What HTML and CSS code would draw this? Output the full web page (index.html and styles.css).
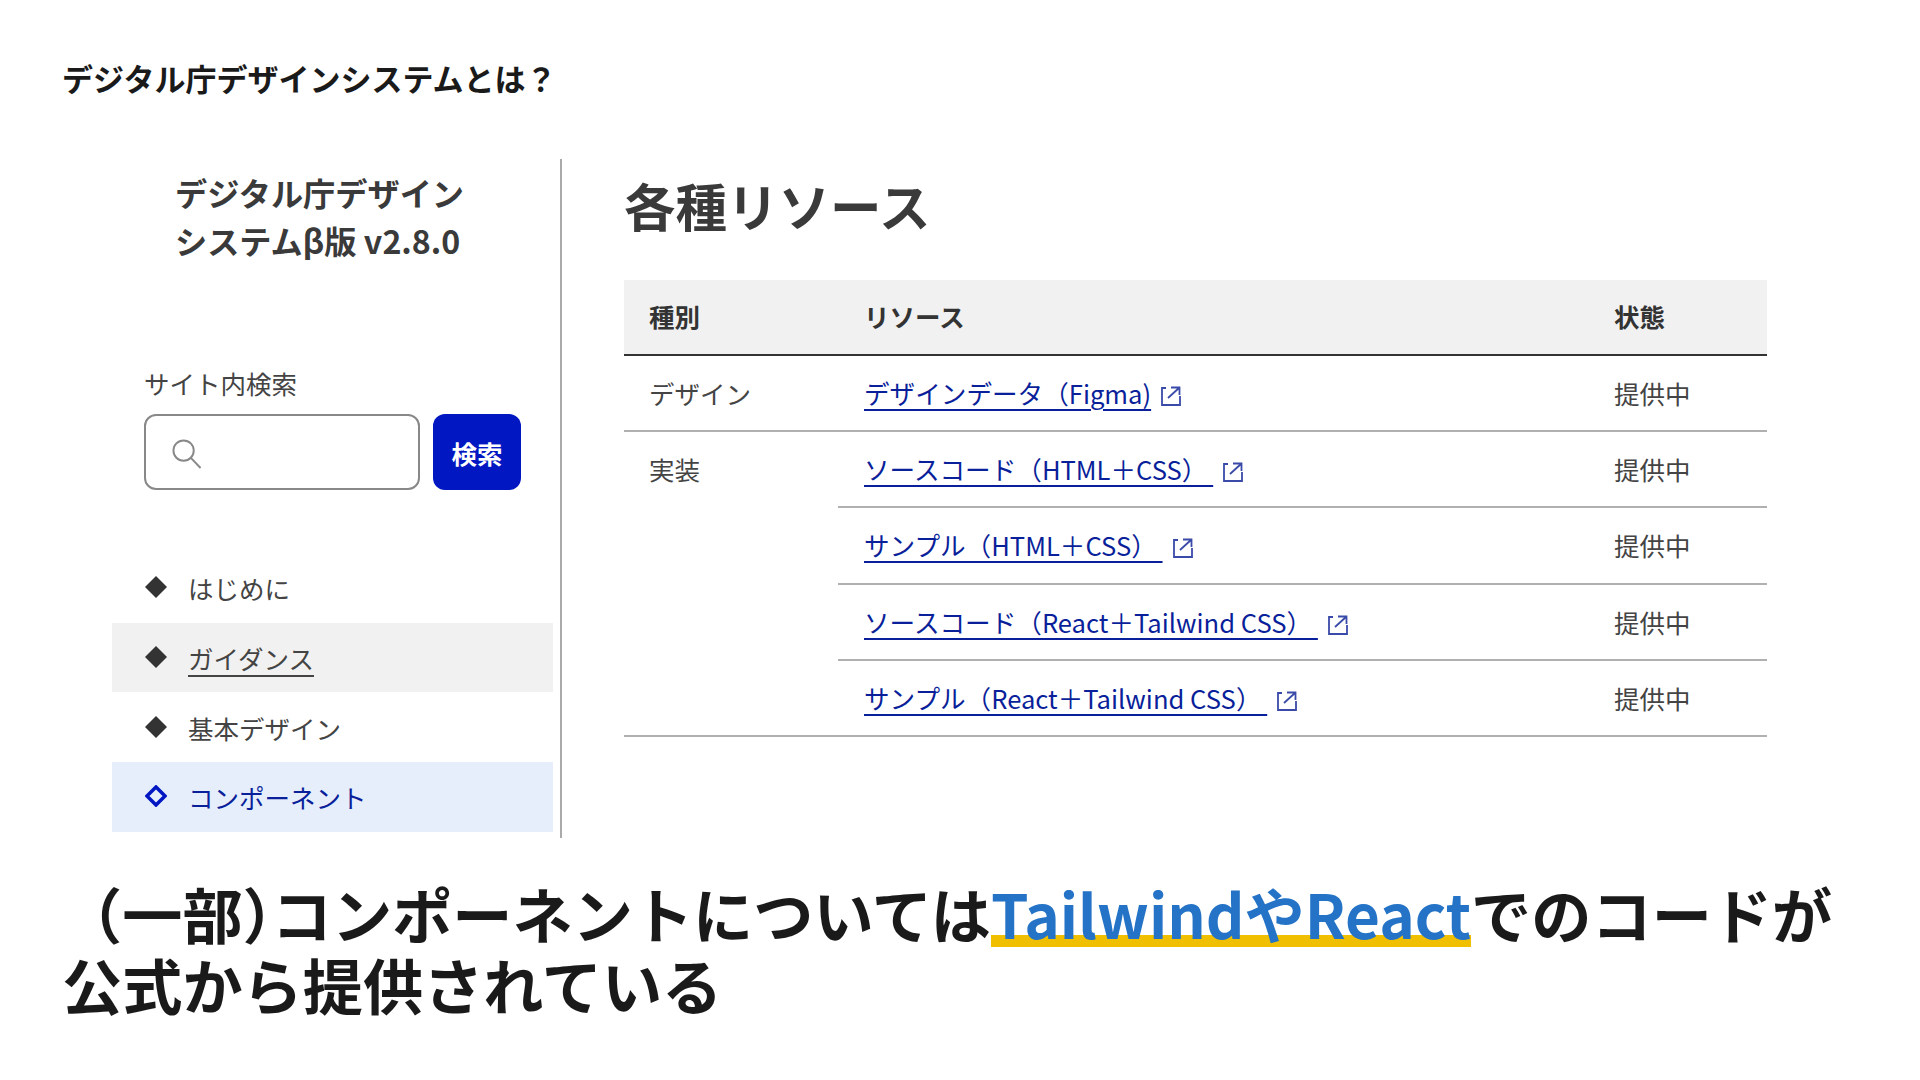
FILE: index.html
```html
<!DOCTYPE html>
<html lang="ja">
<head>
<meta charset="utf-8">
<title>デジタル庁デザインシステムとは？</title>
<link rel="stylesheet" href="styles.css">
</head>
<body>
<div class="slide">
  <h2 class="slide-title">デジタル庁デザインシステムとは？</h2>
  <div class="shot">
    <aside class="side">
      <div class="brand">デジタル庁デザイン<br>システムβ版 v2.8.0</div>
      <div class="search-label">サイト内検索</div>
      <div class="search">
        <div class="search-box">
          <svg class="search-icon" viewBox="0 0 32 32"><circle cx="13" cy="13" r="10.5"/><path d="M20.5 20.5 L30.5 31"/></svg>
        </div>
        <div class="search-btn">検索</div>
      </div>
      <ul class="nav">
        <li class="nav-item"><svg class="dia" viewBox="0 0 22 22"><path d="M11 0 L22 11 L11 22 L0 11 Z"/></svg><span>はじめに</span></li>
        <li class="nav-item hover"><svg class="dia" viewBox="0 0 22 22"><path d="M11 0 L22 11 L11 22 L0 11 Z"/></svg><span class="under">ガイダンス</span></li>
        <li class="nav-item"><svg class="dia" viewBox="0 0 22 22"><path d="M11 0 L22 11 L11 22 L0 11 Z"/></svg><span>基本デザイン</span></li>
        <li class="nav-item active"><svg class="dia open" viewBox="0 0 22 22"><path d="M11 2 L20 11 L11 20 L2 11 Z"/></svg><span>コンポーネント</span></li>
      </ul>
    </aside>
    <main class="content">
      <h1 class="content-title">各種リソース</h1>
      <table class="res">
        <thead>
          <tr><th class="c1">種別</th><th class="c2">リソース</th><th class="c3">状態</th></tr>
        </thead>
        <tbody>
          <tr class="major">
            <td class="c1">デザイン</td>
            <td class="c2"><a class="lnk">デザインデータ（Figma)</a><svg class="ext" viewBox="0 0 20 20"><path d="M5 2 H1 V19 H19 V10"/><path d="M7 12 L18.5 1.5 M10 1.5 H18.5 V9"/></svg></td>
            <td class="c3">提供中</td>
          </tr>
          <tr>
            <td class="c1" rowspan="4">実装</td>
            <td class="c2"><a class="lnk">ソースコード（HTML＋CSS）&nbsp;</a><svg class="ext" viewBox="0 0 20 20"><path d="M5 2 H1 V19 H19 V10"/><path d="M7 12 L18.5 1.5 M10 1.5 H18.5 V9"/></svg></td>
            <td class="c3">提供中</td>
          </tr>
          <tr>
            <td class="c2"><a class="lnk">サンプル（HTML＋CSS）&nbsp;</a><svg class="ext" viewBox="0 0 20 20"><path d="M5 2 H1 V19 H19 V10"/><path d="M7 12 L18.5 1.5 M10 1.5 H18.5 V9"/></svg></td>
            <td class="c3">提供中</td>
          </tr>
          <tr>
            <td class="c2"><a class="lnk">ソースコード（React＋Tailwind CSS）&nbsp;</a><svg class="ext" viewBox="0 0 20 20"><path d="M5 2 H1 V19 H19 V10"/><path d="M7 12 L18.5 1.5 M10 1.5 H18.5 V9"/></svg></td>
            <td class="c3">提供中</td>
          </tr>
          <tr>
            <td class="c2"><a class="lnk">サンプル（React＋Tailwind CSS）&nbsp;</a><svg class="ext" viewBox="0 0 20 20"><path d="M5 2 H1 V19 H19 V10"/><path d="M7 12 L18.5 1.5 M10 1.5 H18.5 V9"/></svg></td>
            <td class="c3">提供中</td>
          </tr>
        </tbody>
      </table>
    </main>
  </div>
  <p class="caption">（一部<span class="tight">）</span>コンポーネントについては<span class="hl">TailwindやReact</span>でのコードが<br>公式から提供されている</p>
</div>
</body>
</html>
```
FILE: styles.css
```css
* { box-sizing: border-box; }
html, body { margin: 0; padding: 0; background: #fff; }
body { font-family: "Noto Sans CJK JP", "Noto Sans", sans-serif; color: #333; }
.slide { width: 1920px; height: 1080px; padding: 55px 0 0 62px; overflow: hidden; }
.slide-title { margin: 0; font-size: 31px; line-height: 46px; font-weight: 700; color: #1a1a1a; }
.shot { display: flex; margin: 58px 0 0 50px; height: 679px; }
.side { width: 450px; border-right: 2px solid #aaa; flex: none; }
.brand { margin: 9px 0 0 63px; font-size: 32.2px; line-height: 48px; font-weight: 700; color: #3a3a3a; }
.search-label { margin: 102px 0 0 32px; font-size: 25.5px; line-height: 34px; color: #444; }
.search { display: flex; gap: 13px; margin: 14px 0 0 32px; }
.search-box { width: 276px; height: 76px; border: 2px solid #888; border-radius: 12px; padding: 22px 0 0 25px; }
.search-icon { display: block; width: 31px; height: 31px; fill: none; stroke: #888; stroke-width: 2; }
.search-btn { width: 88px; height: 76px; border-radius: 12px; background: #0017c1; color: #fff; font-size: 25.5px; font-weight: 700; display: flex; align-items: center; justify-content: center; }
.nav { list-style: none; margin: 63px 0 0; padding: 0; width: 441px; }
.nav-item { height: 69.7px; display: flex; align-items: center; padding-left: 33px; font-size: 25.5px; color: #444; }
.nav-item span { margin-left: 21px; }
.dia { width: 22px; height: 22px; flex: none; fill: #333; margin-top: -1px; }
.hover { background: #f1f1f1; }
.under { text-decoration: underline; text-underline-offset: 6px; text-decoration-thickness: 2px; }
.active { background: #e6eefc; color: #0a1f9a; }
.dia.open { fill: none; stroke: #0017c1; stroke-width: 3.5; }
.content { flex: none; width: 1143px; margin-left: 62px; }
.content-title { margin: 0; font-size: 51.5px; line-height: 76px; font-weight: 700; color: #3a3a3a; padding-top: 8px; }
.res { width: 1143px; margin-top: 37px; border-collapse: collapse; table-layout: fixed; font-size: 25.5px; }
.res th { height: 75px; background: #f1f1f1; border-bottom: 2px solid #333; font-weight: 700; text-align: left; color: #333; padding-bottom: 5px; }
.res td { height: 76.2px; border-bottom: 2px solid #b0b0b0; color: #444; padding-bottom: 2px; }
.res td[rowspan] { vertical-align: top; padding-top: 18px; }
.c1 { width: 214px; padding-left: 25px; }
.c2 { width: 776px; padding-left: 26px; }
.res .c3 { padding-left: 0; }
.lnk { color: #0a1f9a; text-decoration: underline; text-decoration-thickness: 2px; text-underline-offset: 5px; font-size: 25.6px; }
.ext { display: inline-block; width: 20px; height: 20px; margin-left: 10px; vertical-align: -2px; fill: none; stroke: #3a4aa8; stroke-width: 1.8; }
.caption { margin: 39px 0 0; font-size: 60.2px; line-height: 71px; font-weight: 700; color: #1a1a1a; white-space: nowrap; }
.tight { letter-spacing: -31px; }
.hl { color: #2473c6; background: linear-gradient(#f0c000, #f0c000) no-repeat left 0 bottom 9px / 100% 12px; border-radius: 2px; }
```
